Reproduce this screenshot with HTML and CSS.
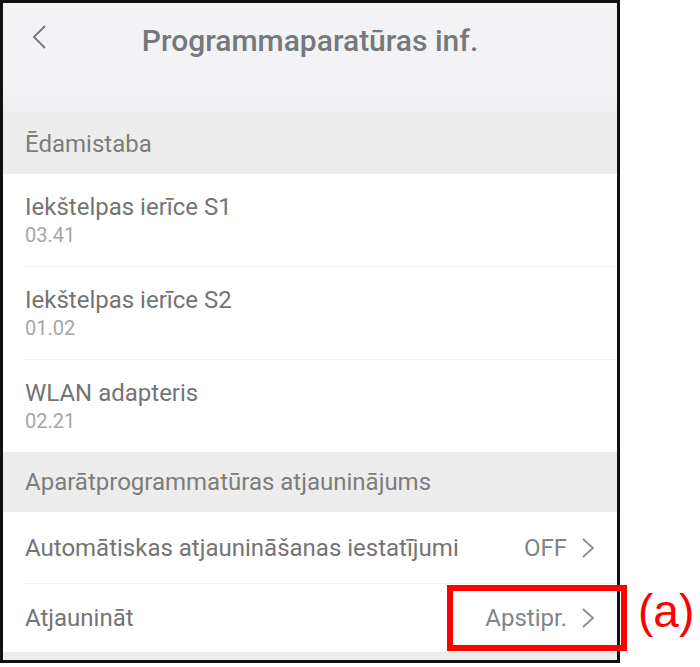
FILE: index.html
```html
<!DOCTYPE html>
<html>
    <head>
        <meta charset="utf-8" />
        <title>Programmaparatūras inf.</title>
        <link rel="stylesheet" href="styles.css">
    </head>
    <body>
        <div class="stage">
            <!-- 手機畫面 -->
            <div class="phone">
                <div class="topbar">
                    <div class="nav">
                        <svg class="back" width="16" height="26" viewBox="0 0 16 26">
                            <polyline points="14,2 3,13 14,24" fill="none" stroke="#7a7c7f" stroke-width="2" />
                        </svg>
                        <h2 class="title">Programmaparatūras inf.</h2>
                    </div>
                </div>

                <div class="section">Ēdamistaba</div>

                <div class="item">
                    <div class="name">Iekštelpas ierīce S1</div>
                    <div class="version">03.41</div>
                </div>
                <div class="item">
                    <div class="name">Iekštelpas ierīce S2</div>
                    <div class="version">01.02</div>
                </div>
                <div class="item last">
                    <div class="name">WLAN adapteris</div>
                    <div class="version">02.21</div>
                </div>

                <div class="section">Aparātprogrammatūras atjauninājums</div>

                <div class="item row auto">
                    <div class="name">Automātiskas atjaunināšanas iestatījumi</div>
                    <div class="value">OFF
                        <svg class="arrow" width="14" height="22" viewBox="0 0 14 22">
                            <polyline points="2,2 12,11 2,20" fill="none" stroke="#8a8c8f" stroke-width="1.8" />
                        </svg>
                    </div>
                </div>
                <div class="item row update last">
                    <div class="name">Atjaunināt</div>
                    <div class="value">Apstipr.
                        <svg class="arrow" width="14" height="22" viewBox="0 0 14 22">
                            <polyline points="2,2 12,11 2,20" fill="none" stroke="#8a8c8f" stroke-width="1.8" />
                        </svg>
                    </div>
                </div>
                <div class="bottom"></div>
            </div>

            <!-- 標註 -->
            <div class="mark"></div>
            <div class="mark-label">(a)</div>
        </div>
    </body>
</html>
```

FILE: styles.css
```css
/* 整體頁面 */
body {
    margin: 0;
    background-color: white;
    font-family: Roboto, "Noto Sans", sans-serif;
}

.stage {
    position: relative;
    width: 700px;
    height: 667px;
}

/* 手機外框 */
.phone {
    width: 614px;
    height: 657px;
    border: 3px solid #111;
    background-color: #ededed;
    display: flex;
    flex-direction: column;
    overflow: hidden;
}

/* 上方標題列 */
.topbar {
    height: 110px;
    flex-shrink: 0;
    background: linear-gradient(#f3f3f5 0%, #f3f3f5 75%, #efeff1 100%);
    border-bottom: 1px solid #e8e8ea;
}

.nav {
    position: relative;
    height: 76px;
    display: flex;
    align-items: center;
    justify-content: center;
}

.back {
    position: absolute;
    left: 28px;
    top: 21px;
}

h2.title {
    margin: 0;
    margin-top: -2px;
    font-size: 30px;
    font-weight: 500;
    color: #76797c;
}

/* 區段標題 */
.section {
    height: 60px;
    flex-shrink: 0;
    display: flex;
    align-items: center;
    padding-left: 22px;
    font-size: 24px;
    color: #7d7d7d;
    background-color: #ededed;
}

/* 清單項目 */
.item {
    height: 92px;
    flex-shrink: 0;
    margin-left: 22px;
    padding-right: 22px;
    display: flex;
    flex-direction: column;
    justify-content: center;
    background-color: white;
    border-bottom: 1px solid #f0f0f0;
    box-shadow: -22px 0 0 white;
}

.item.last {
    border-bottom: none;
}

.name {
    font-size: 24px;
    color: #747474;
    line-height: 30px;
}

.version {
    font-size: 20px;
    color: #a6a6a6;
    line-height: 26px;
}

/* 右側有值的項目 */
.item.row {
    flex-direction: row;
    align-items: center;
    justify-content: space-between;
}

.item.auto {
    height: 71px;
}

.item.update {
    height: 68px;
}

.value {
    display: flex;
    align-items: center;
    gap: 14px;
    font-size: 24px;
    color: #828487;
}

.bottom {
    flex: 1;
    background-color: #ededed;
}

/* 紅色標註框 */
.mark {
    position: absolute;
    left: 447px;
    top: 585px;
    width: 168px;
    height: 54px;
    border: 6px solid #ff0000;
}

.mark-label {
    position: absolute;
    left: 638px;
    top: 584px;
    font-family: "Liberation Sans", Arial, sans-serif;
    font-size: 46px;
    color: #ff0000;
}
```
